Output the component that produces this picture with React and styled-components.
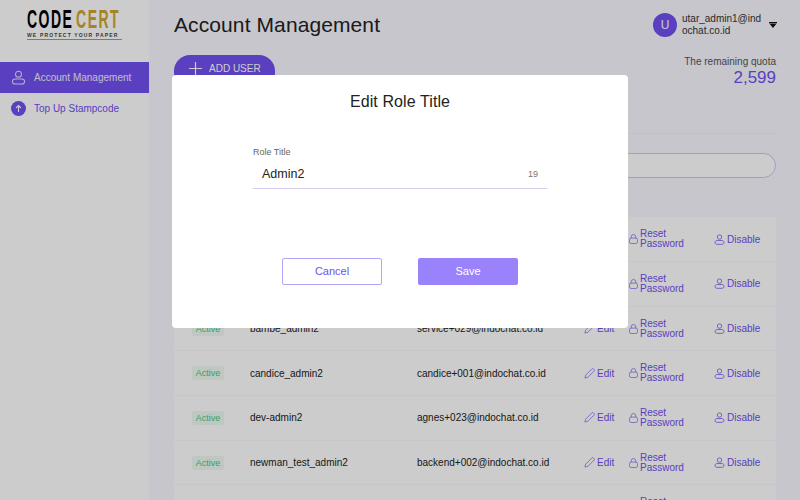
import React from 'react'
import styled, { createGlobalStyle } from 'styled-components'

const PURPLE = '#7150f0'

const users = [
  { name: '', email: '' },
  { name: '', email: '' },
  { name: 'bambe_admin2', email: 'service+029@indochat.co.id' },
  { name: 'candice_admin2', email: 'candice+001@indochat.co.id' },
  { name: 'dev-admin2', email: 'agnes+023@indochat.co.id' },
  { name: 'newman_test_admin2', email: 'backend+002@indochat.co.id' },
  { name: '', email: '' },
]

const UserIcon = ({ size = 13, color = PURPLE }) => (
  <svg width={size} height={size} viewBox="0 0 16 16" fill="none" stroke={color} strokeWidth="1.100">
    <circle cx="8" cy="4.500" r="3.200" />
    <path d="M4.500 9.500h7c1.900 0 3 1.300 3 2.700 0 1.500-1.100 2.800-3 2.800h-7c-1.900 0-3-1.300-3-2.800 0-1.400 1.100-2.700 3-2.700z" />
  </svg>
)

const LockIcon = () => (
  <svg width="9" height="10" viewBox="0 0 10 11" fill="none" stroke={PURPLE} strokeOpacity="0.7" strokeWidth="1">
    <rect x="0.500" y="4.500" width="9" height="6" rx="2" />
    <path d="M2.500 4.500V3a2.500 2.500 0 0 1 5 0v1.500" />
  </svg>
)

const PencilIcon = () => (
  <svg width="11" height="11" viewBox="0 0 12 12" fill="none" stroke={PURPLE} strokeOpacity="0.7" strokeWidth="1" strokeLinejoin="round">
    <path d="M1 11l.8-3.200L8.600 1a1.100 1.100 0 0 1 1.600 0l.8.800a1.100 1.100 0 0 1 0 1.600L4.200 10.200z" />
  </svg>
)

const UpIcon = () => (
  <svg width="15" height="15" viewBox="0 0 15 15">
    <circle cx="7.500" cy="7.500" r="7.500" fill={PURPLE} />
    <path d="M7.500 11V4.500M5 7l2.500-2.500L10 7" fill="none" stroke="#fff" strokeWidth="1.100" />
  </svg>
)

const PlusIcon = () => (
  <svg width="13" height="13" viewBox="0 0 13 13" stroke="#fff" strokeWidth="1.200">
    <path d="M6.500 0v13M0 6.500h13" />
  </svg>
)

const CaretIcon = () => (
  <svg width="8" height="6" viewBox="0 0 8 6" fill="#111">
    <path d="M0 0h8v1.200H0zM.6 1.800h6.800L4 6z" />
  </svg>
)

const App = () => {
  return (
    <Page>
      <GlobalStyle />
      <Sidebar>
        <Logo>
          <LogoWord>
            <span>CODE</span>
            <Gold>CERT</Gold>
          </LogoWord>
          <Tagline>WE PROTECT YOUR PAPER</Tagline>
        </Logo>
        <NavItem $active>
          <UserIcon size={15} color="#e4dcff" />
          Account Management
        </NavItem>
        <NavItem>
          <UpIcon />
          Top Up Stampcode
        </NavItem>
      </Sidebar>

      <Main>
        <Header>
          <Title>Account Management</Title>
          <Account>
            <Avatar>U</Avatar>
            <AccountName>utar_admin1@indochat.co.id</AccountName>
            <CaretIcon />
          </Account>
        </Header>

        <Toolbar>
          <AddButton>
            <PlusIcon />
            ADD USER
          </AddButton>
          <Quota>
            <QuotaLabel>The remaining quota</QuotaLabel>
            <QuotaValue>2,599</QuotaValue>
          </Quota>
        </Toolbar>

        <Divider />
        <Search />

        <Table>
          {users.map((u, i) => (
            <Row key={i}>
              <Badge>Active</Badge>
              <span>{u.name}</span>
              <span>{u.email}</span>
              <ActionLink>
                <PencilIcon />
                Edit
              </ActionLink>
              <ActionLink>
                <LockIcon />
                <ResetText>Reset Password</ResetText>
              </ActionLink>
              <ActionLink>
                <UserIcon size={11} />
                Disable
              </ActionLink>
            </Row>
          ))}
        </Table>
      </Main>

      <Overlay>
        <Modal>
          <ModalTitle>Edit Role Title</ModalTitle>
          <Field>
            <FieldLabel>Role Title</FieldLabel>
            <FieldInput>
              Admin2
              <Counter>19</Counter>
            </FieldInput>
          </Field>
          <ModalActions>
            <CancelButton>Cancel</CancelButton>
            <SaveButton>Save</SaveButton>
          </ModalActions>
        </Modal>
      </Overlay>
    </Page>
  )
}

export default App

const GlobalStyle = createGlobalStyle`
  html, body {
    margin: 0;
    height: 100%;
    overflow: hidden;
    font-family: "Liberation Sans", Arial, sans-serif;
  }
`

const Page = styled.div`
  display: flex;
  width: 800px;
  height: 500px;
  overflow: hidden;
  background: #f8f8ff;
`

const Sidebar = styled.aside`
  flex: 0 0 149px;
  min-width: 0;
  overflow: hidden;
  background: #fff;
`

const Logo = styled.div`
  height: 62px;
  padding: 8px 0 0 27px;
  box-sizing: border-box;
`

const LogoWord = styled.div`
  display: flex;
  gap: 5px;
  width: 164px;
  font-size: 25px;
  line-height: 23px;
  letter-spacing: 2.600px;
  font-weight: 700;
  color: #000;
  transform: scaleX(0.56);
  transform-origin: left;
  white-space: nowrap;
`

const Gold = styled.span`
  color: #d0a52e;
`

const Tagline = styled.div`
  width: 95px;
  margin-top: 1px;
  padding-bottom: 1px;
  border-bottom: 1px solid #999;
  font-size: 5px;
  line-height: 6px;
  font-weight: 700;
  letter-spacing: 1.150px;
  color: #444;
  white-space: nowrap;
  overflow: hidden;
`

const NavItem = styled.div`
  display: flex;
  align-items: center;
  gap: 8px;
  height: ${p => (p.$active ? '31px' : '30px')};
  padding-left: 11px;
  padding-bottom: ${p => (p.$active ? '1px' : '0')};
  box-sizing: border-box;
  font-size: 10px;
  background: ${p => (p.$active ? PURPLE : 'transparent')};
  color: ${p => (p.$active ? '#f0ecff' : PURPLE)};
`

const Main = styled.main`
  flex: 1;
  padding: 0 24px 0 25px;
  min-width: 0;
`

const Header = styled.header`
  display: flex;
  justify-content: space-between;
  align-items: center;
  height: 50px;
`

const Title = styled.h1`
  margin: 0;
  font-size: 21px;
  letter-spacing: 0.100px;
  font-weight: 400;
  color: #222;
`

const Account = styled.div`
  display: flex;
  align-items: center;
  margin-right: -1px;
`

const Avatar = styled.div`
  display: flex;
  align-items: center;
  justify-content: center;
  width: 24px;
  height: 24px;
  border-radius: 50%;
  background: ${PURPLE};
  color: #fff;
  font-size: 12px;
`

const AccountName = styled.div`
  width: 81px;
  margin: 0 6px 0 5px;
  font-size: 10px;
  line-height: 12px;
  word-break: break-all;
  color: #333;
`

const Toolbar = styled.div`
  display: flex;
  justify-content: space-between;
  align-items: flex-start;
  height: 83px;
  padding-top: 5px;
  box-sizing: border-box;
`

const AddButton = styled.button`
  display: flex;
  align-items: flex-start;
  gap: 7px;
  width: 101px;
  height: 34px;
  margin: 0;
  padding: 7px 0 0 15px;
  border: 0;
  border-radius: 16px;
  background: ${PURPLE};
  color: #fff;
  font: 10px "Liberation Sans", Arial, sans-serif;
  line-height: 13px;
`

const Quota = styled.div`
  text-align: right;
`

const QuotaLabel = styled.div`
  font-size: 10px;
  line-height: 13px;
  color: #555;
`

const QuotaValue = styled.div`
  font-size: 17px;
  line-height: 20px;
  color: ${PURPLE};
`

const Divider = styled.div`
  height: 1px;
  background: #f0f0f6;
`

const Search = styled.div`
  height: 25px;
  margin-top: 19px;
  box-sizing: border-box;
  border: 1px solid #cdc2fb;
  border-radius: 13px;
  background: #fff;
`

const Table = styled.div`
  margin-top: 39.400px;
`

const Row = styled.div`
  display: grid;
  grid-template-columns: 58px 167px 167px 45px 85px 1fr;
  align-items: center;
  height: 44.670px;
  box-sizing: border-box;
  padding-left: 18px;
  background: #fff;
  border-bottom: 1px solid #f8f8ff;
  font-size: 10px;
  color: #222;
`

const Badge = styled.span`
  justify-self: start;
  width: 32px;
  padding: 2px 0;
  border-radius: 2px;
  background: #eefbf2;
  color: #4cc584;
  font-size: 9px;
  line-height: 10px;
  text-align: center;
`

const ActionLink = styled.span`
  display: flex;
  align-items: center;
  gap: 2px;
  color: ${PURPLE};
`

const ResetText = styled.span`
  width: 50px;
  line-height: 10px;
`

const Overlay = styled.div`
  position: fixed;
  inset: 0;
  display: flex;
  justify-content: center;
  align-items: flex-start;
  padding-top: 75px;
  background: rgba(0, 0, 0, 0.2);
`

const Modal = styled.div`
  width: 456px;
  height: 253px;
  border-radius: 4px;
  background: #fff;
  text-align: center;
`

const ModalTitle = styled.h2`
  margin: 0;
  padding-top: 18px;
  font-size: 16px;
  line-height: 18px;
  letter-spacing: 0.100px;
  font-weight: 400;
  color: #222;
`

const Field = styled.div`
  width: 294px;
  margin: 36px auto 0;
  text-align: left;
`

const FieldLabel = styled.label`
  display: block;
  font-size: 9px;
  line-height: 11px;
  color: #666;
`

const FieldInput = styled.div`
  display: flex;
  justify-content: space-between;
  align-items: center;
  height: 28px;
  padding: 2px 9px 0;
  border-bottom: 1px solid #d6cff0;
  font-size: 12.500px;
  color: #222;
`

const Counter = styled.span`
  font-size: 9px;
  color: #777;
`

const ModalActions = styled.div`
  display: flex;
  justify-content: center;
  gap: 36px;
  margin-top: 69px;
`

const CancelButton = styled.button`
  width: 100px;
  height: 27px;
  padding: 0 0 2px;
  border: 1px solid #b4a4f6;
  border-radius: 2px;
  background: #fff;
  color: ${PURPLE};
  font: 11px "Liberation Sans", Arial, sans-serif;
`

const SaveButton = styled.button`
  width: 100px;
  height: 27px;
  padding: 0 0 2px;
  border: 0;
  border-radius: 2px;
  background: #9a82fa;
  color: #fff;
  font: 11px "Liberation Sans", Arial, sans-serif;
`
